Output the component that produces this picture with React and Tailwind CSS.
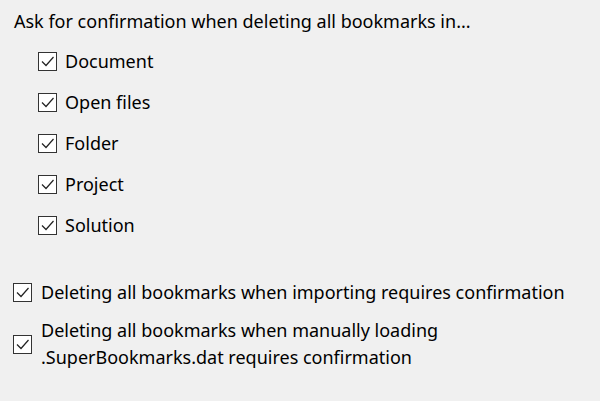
const Box = () => (
  <span className="flex h-[19px] w-[19px] shrink-0 items-center justify-center border border-[#333333] bg-white">
    <svg width="17" height="17" viewBox="0 0 17 17" fill="none">
      <path d="M3 8.5 L7 12.5 L14.5 4" stroke="#222222" strokeWidth="1.2" />
    </svg>
  </span>
);

const items = ["Document", "Open files", "Folder", "Project", "Solution"];

export default function App() {
  return (
    <div className="h-[401px] w-[600px] bg-[#f0f0f0] font-['Segoe_UI','Noto_Sans',sans-serif] text-[18px] text-black">
      <div className="pl-[14px] pt-[9px] leading-[24px]">
        Ask for confirmation when deleting all bookmarks in...
      </div>
      <div className="flex flex-col gap-[17px] pl-[38px] pt-[16px]">
        {items.map((t) => (
          <div key={t} className="flex items-center gap-[8px] leading-[24px]">
            <Box />
            <span>{t}</span>
          </div>
        ))}
      </div>
      <div className="flex flex-col gap-[13px] pl-[13px] pt-[43px]">
        <div className="flex items-center gap-[9px] leading-[24px]">
          <Box />
          <span>Deleting all bookmarks when importing requires confirmation</span>
        </div>
        <div className="flex items-center gap-[9px] leading-[27px]">
          <Box />
          <span>
            Deleting all bookmarks when manually loading
            <br />
            .SuperBookmarks.dat requires confirmation
          </span>
        </div>
      </div>
    </div>
  );
}
